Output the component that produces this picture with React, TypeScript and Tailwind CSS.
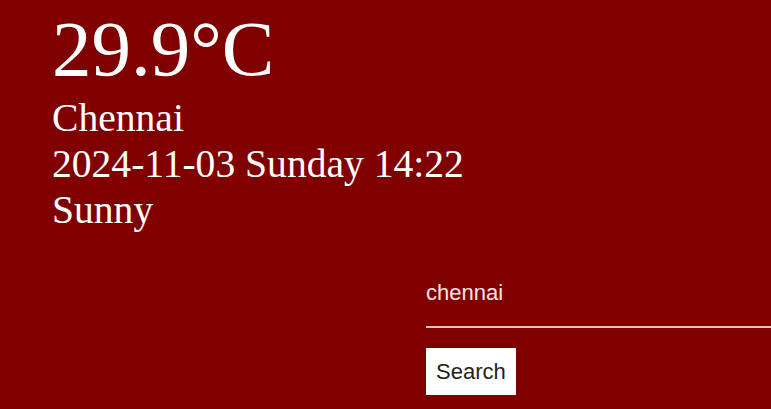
import React from "react";

export default function App() {
  return (
    <div className="w-[771px] h-[409px] overflow-hidden bg-[#800000] text-white">
      <div className="pl-[52px] pt-[3px]" style={{ fontFamily: '"Liberation Serif", "Times New Roman", serif' }}>
        <div className="text-[79px] leading-[92px]">29.9°C</div>
        <div className="text-[39.6px] leading-[46px]">Chennai</div>
        <div className="text-[39.6px] leading-[46px]">2024-11-03 Sunday 14:22</div>
        <div className="text-[39.6px] leading-[46px]">Sunny</div>
      </div>
      <div className="flex justify-end mt-[27px]">
        <div className="w-[345px] flex flex-col items-start" style={{ fontFamily: '"Liberation Sans", Arial, sans-serif' }}>
          <input
            defaultValue="chennai"
            className="w-full bg-transparent text-[#f8e4e4] text-[22px] leading-[25px] pt-[20px] pb-[21px] border-b-2 border-[#f4bcbc] outline-none"
            style={{ fontFamily: '"Liberation Sans", Arial, sans-serif' }}
          />
          <button className="mt-[20px] bg-white text-[#222] text-[22px] leading-[25px] px-[10px] py-[11px]">
            Search
          </button>
        </div>
      </div>
    </div>
  );
}
